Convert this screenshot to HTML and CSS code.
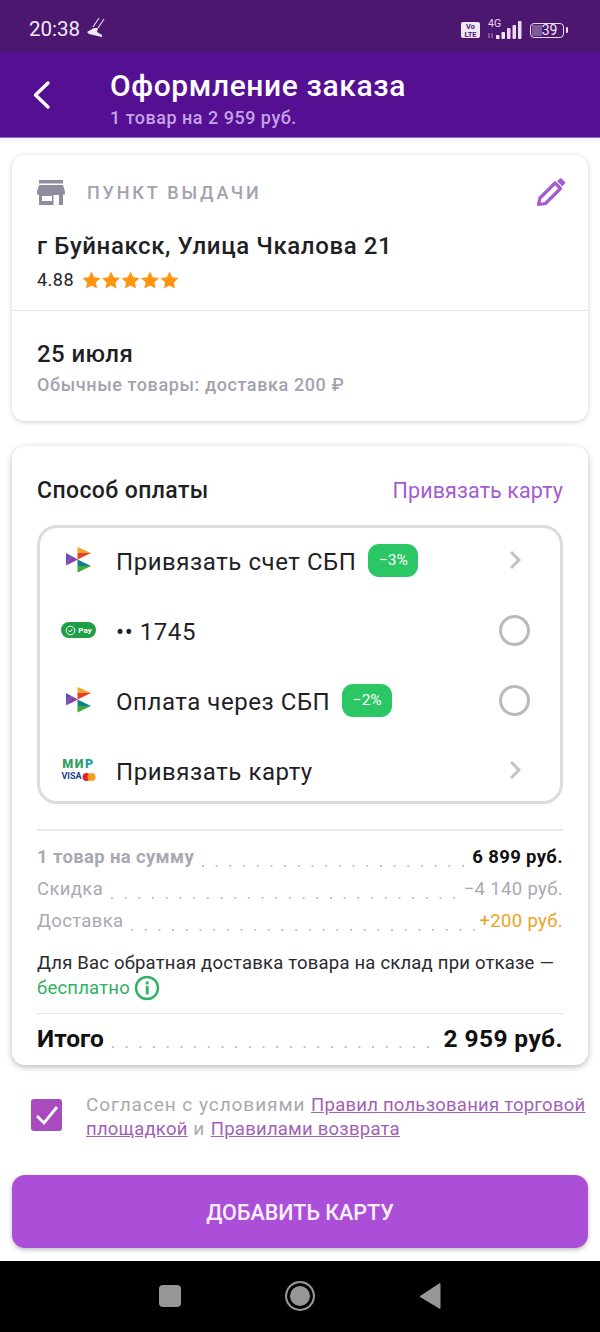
FILE: index.html
```html
<!DOCTYPE html>
<html lang="ru">
<head>
<meta charset="utf-8">
<title>Оформление заказа</title>
<link rel="stylesheet" href="styles.css">
</head>
<body>
<div class="screen">
  <header class="status">
    <div class="status-left">
      <span class="time">20:38</span>
      <svg class="shoe" width="20" height="24" viewBox="0 0 20 24"><path d="M14 1 8 10M19 2l-6 9" stroke="#d9c4e4" stroke-width="1.300" fill="none"/><path d="M2 15l7-4h4l-1 4 5 3v2L4 17Z" fill="#f3e9f6"/></svg>
    </div>
    <div class="status-right">
      <span class="volte">Vo<br>LTE</span>
      <svg width="40" height="24" viewBox="0 0 40 24"><text x="4" y="9" class="net">4G</text><path d="M5 15v5M8 20v-5" stroke="#9d7fb0" stroke-width="1.200"/><rect x="12" y="17" width="3.500" height="4" rx="1" fill="#f3e9f6"/><rect x="17.500" y="14" width="3.500" height="7" rx="1" fill="#f3e9f6"/><rect x="23" y="10" width="3.500" height="11" rx="1" fill="#e9dcef"/><rect x="28.500" y="7" width="3.500" height="14" rx="1" fill="#e9dcef"/><rect x="34" y="3" width="3.500" height="18" rx="1" fill="#e9dcef"/></svg>
      <span class="battery"><span class="battery-fill"></span><span class="battery-num">39</span></span>
      <span class="battery-tip"></span>
    </div>
  </header>
  <div class="appbar">
    <svg class="back" width="20" height="30" viewBox="0 0 20 30"><path d="M16 3 3.500 15 16 27" fill="none" stroke="#fff" stroke-width="3.400" stroke-linecap="round" stroke-linejoin="round"/></svg>
    <div class="appbar-text">
      <div class="title">Оформление заказа</div>
      <div class="subtitle">1 товар на 2 959 руб.</div>
    </div>
  </div>

  <main class="content">
    <section class="card pickup">
      <div class="pickup-top">
        <div class="pickup-head">
          <svg width="28" height="26" viewBox="0 0 28 26"><path d="M2 1h24v3.500H2zM2 6h24l2 6.500v3h-2V26h-4v-10h-5.500v10H2V15.500H0v-3Z" fill="#8f8c9f"/><rect x="5" y="17" width="10" height="5" fill="#fff"/></svg>
          <span class="pickup-label">ПУНКТ ВЫДАЧИ</span>
          <svg class="edit" width="30" height="30" viewBox="0 0 30 30"><path d="M2.500 27.500 4 21 19 6l5.500 5.500-15 15Z" fill="none" stroke="#a65bd1" stroke-width="3.200" stroke-linejoin="round"/><path d="M21 4l4-3 4.500 4.500-3 4Z" fill="#a65bd1"/></svg>
        </div>
        <div class="address">г Буйнакск, Улица Чкалова 21</div>
        <div class="rating">
          <span>4.88</span>
          <span class="stars">
            <svg width="97" height="18" viewBox="0 0 97 18"><use href="#star"/><use href="#star" x="19.500"/><use href="#star" x="39"/><use href="#star" x="58.500"/><use href="#star" x="78"/></svg>
          </span>
        </div>
      </div>
      <div class="pickup-bottom">
        <div class="date">25 июля</div>
        <div class="delivery-note">Обычные товары: доставка 200 ₽</div>
      </div>
    </section>

    <section class="card pay">
      <div class="pay-head">
        <span class="pay-title">Способ оплаты</span>
        <span class="pay-link">Привязать карту</span>
      </div>
      <div class="methods">
        <div class="method">
          <span class="method-icon"><svg width="26" height="26" viewBox="0 0 26 26"><use href="#sbp"/></svg></span>
          <span class="method-name">Привязать счет СБП</span>
          <span class="tag">−3%</span>
          <svg class="chev" width="14" height="20" viewBox="0 0 14 20"><path d="M3 2l8 8-8 8" fill="none" stroke="#c2c2ca" stroke-width="3"/></svg>
        </div>
        <div class="method">
          <span class="method-icon"><span class="gpay"><svg width="11" height="11" viewBox="0 0 11 11"><circle cx="5.500" cy="5.500" r="4.300" fill="none" stroke="#fff" stroke-width="1"/><path d="M3.500 5.500l1.500 1.500 2.500-3" fill="none" stroke="#fff"/></svg><span>Pay</span></span></span>
          <span class="method-name">•• 1745</span>
          <span class="radio"></span>
        </div>
        <div class="method">
          <span class="method-icon"><svg width="26" height="26" viewBox="0 0 26 26"><use href="#sbp"/></svg></span>
          <span class="method-name">Оплата через СБП</span>
          <span class="tag">−2%</span>
          <span class="radio"></span>
        </div>
        <div class="method">
          <span class="method-icon"><span class="cards"><span class="mir">МИ<span class="mir-p">Р</span></span><span class="visa">VISA<svg width="14" height="8" viewBox="0 0 14 8"><circle cx="4.500" cy="4" r="4" fill="#e8202a"/><circle cx="9.500" cy="4" r="4" fill="#f79e1b"/></svg></span></span></span>
          <span class="method-name">Привязать карту</span>
          <svg class="chev" width="14" height="20" viewBox="0 0 14 20"><path d="M3 2l8 8-8 8" fill="none" stroke="#c2c2ca" stroke-width="3"/></svg>
        </div>
      </div>

      <div class="summary">
        <div class="line bold"><span class="line-name">1 товар на сумму</span><span class="dots"></span><span class="line-val black">6 899 руб.</span></div>
        <div class="line"><span class="line-name">Скидка</span><span class="dots"></span><span class="line-val">−4 140 руб.</span></div>
        <div class="line"><span class="line-name">Доставка</span><span class="dots"></span><span class="line-val orange">+200 руб.</span></div>
      </div>
      <div class="return-note">
        Для Вас обратная доставка товара на склад при отказе —<br>
        <span class="free">бесплатно</span><svg class="info" width="26" height="26" viewBox="0 0 26 26"><circle cx="13" cy="13" r="11" fill="none" stroke="#2fb163" stroke-width="2.400"/><rect x="11.800" y="6.500" width="2.800" height="3" fill="#2fb163"/><rect x="11.800" y="11" width="2.800" height="8.500" fill="#2fb163"/></svg>
      </div>
      <div class="total"><span class="total-name">Итого</span><span class="dots thin"></span><span class="total-val">2 959 руб.</span></div>
    </section>

    <div class="agree">
      <span class="check"><svg width="32" height="32" viewBox="0 0 32 32"><path d="M6 17l7 7L26 8" fill="none" stroke="#fff" stroke-width="2.800"/></svg></span>
      <p class="agree-text">Согласен с условиями <a class="agree-link">Правил пользования торговой</a><br><a class="agree-link">площадкой</a> и <a class="agree-link">Правилами возврата</a></p>
    </div>

    <button class="cta">ДОБАВИТЬ КАРТУ</button>
  </main>

  <footer class="navbar">
    <span class="nav-square"></span>
    <span class="nav-circle"></span>
    <svg width="22" height="26" viewBox="0 0 22 26"><path d="M21 0.500v25L1 13.500Z" fill="#969696" stroke="#969696" stroke-linejoin="round"/></svg>
  </footer>
</div>

<svg class="defs" width="0" height="0">
  <defs>
    <path id="star" d="M9.500 0.500l2.700 5.800 6.300.8-4.600 4.300 1.200 6.200-5.600-3.100-5.600 3.100 1.200-6.200L.5 7.100l6.300-.8Z" fill="#ff9510"/>
    <g id="sbp">
      <path d="M11.500 0 25 6l-13.500 0Z" fill="#f2a52b"/>
      <path d="M11.500 6H25L11.500 12.500Z" fill="#e5402c"/>
      <path d="M0 6l6 3.200L3 12.500l-3 6Z" fill="#5b55b8"/>
      <path d="M6 9.200l6 3.300-12 6 3-6Z" fill="#8e3fa6"/>
      <path d="M11.500 12.500 25 19H11.500Z" fill="#10808f"/>
      <path d="M11.500 19H25L11.500 25.500Z" fill="#3fa83f"/>
    </g>
  </defs>
</svg>
</body>
</html>
```
FILE: styles.css
```css
* { box-sizing: border-box; }
html, body { margin: 0; padding: 0; }
body {
  width: 600px;
  height: 1332px;
  overflow: hidden;
  font-family: Roboto, "Noto Sans", sans-serif;
  background: #fff;
  color: #1c1c22;
}
.screen { display: flex; flex-direction: column; height: 1332px; }
.defs { position: absolute; }

.status {
  height: 52px;
  flex: none;
  background: #4c176f;
  display: flex;
  align-items: center;
  justify-content: space-between;
  padding: 0 32px 0 29px;
  color: #f3e9f6;
}
.status-left { display: flex; align-items: center; gap: 5px; }
.time { font-size: 20.500px; font-weight: 400; padding-top: 5px; }
.shoe { margin-top: 6px; }
.status-right { display: flex; align-items: center; padding-top: 8px; }
.volte {
  width: 19px;
  height: 16px;
  background: #efe6f2;
  color: #4c176f;
  border-radius: 2px;
  font-size: 7.500px;
  font-weight: 700;
  line-height: 7.500px;
  text-align: center;
  margin-right: 4px;
  padding-top: 1px;
}
.net { font-size: 10.500px; fill: #e9dcef; font-family: Roboto, sans-serif; }
.battery {
  position: relative;
  width: 34px;
  height: 15px;
  margin-left: 6px;
  border: 1.500px solid #e9dcef;
  border-radius: 4px;
  display: flex;
  align-items: center;
  justify-content: center;
  overflow: hidden;
}
.battery-fill { position: absolute; left: 1px; top: 1px; bottom: 1px; width: 10px; background: #7f5a9a; }
.battery-num { position: relative; font-size: 14px; line-height: 13px; padding-left: 5px; }
.battery-tip { width: 2px; height: 6px; background: #e9dcef; margin-left: 2px; border-radius: 1px; }

.appbar {
  height: 86px;
  flex: none;
  background: #540f92;
  border-bottom: 1px solid #9a6cc8;
  box-shadow: 0 2px 3px rgba(0, 0, 0, .08);
  display: flex;
  align-items: center;
  padding-left: 32px;
}
.back { margin-right: 58px; flex: none; }
.appbar-text { padding-top: 7px; }
.title { font-size: 30px; line-height: 33px; font-weight: 500; color: #fff; letter-spacing: .6px; }
.subtitle { margin-top: 5px; font-size: 18px; line-height: 21px; font-weight: 500; color: #c6a3e6; letter-spacing: .5px; }

.content { flex: 1; padding: 17px 12px 0; display: flex; flex-direction: column; min-height: 0; }
.card { background: #fff; border-radius: 13px; box-shadow: 0 1px 5px rgba(0, 0, 0, .2); }

.pickup { height: 266px; margin-bottom: 25px; flex: none; }
.pickup-top { height: 156px; border-bottom: 1px solid #e3e3e6; padding: 22px 22px 0 25px; }
.pickup-head { display: flex; align-items: center; height: 30px; }
.pickup-label { margin-left: 22px; font-size: 18px; font-weight: 500; letter-spacing: 2.800px; color: #a3a2b0; }
.edit { margin-left: auto; }
.address { margin-top: 24px; font-size: 24px; line-height: 30px; font-weight: 500; letter-spacing: .6px; color: #1f1f25; }
.rating { margin-top: 7px; display: flex; align-items: center; font-size: 18px; line-height: 24px; color: #25252b; gap: 8px; letter-spacing: .5px; }
.stars { display: flex; }
.pickup-bottom { padding: 28px 25px 0; }
.date { font-size: 24px; line-height: 30px; font-weight: 500; letter-spacing: .4px; color: #1f1f25; }
.delivery-note { margin-top: 5px; font-size: 18px; line-height: 22px; font-weight: 500; color: #a3a2b0; letter-spacing: .6px; }

.pay { height: 619px; flex: none; padding: 27px 25px 0; box-shadow: 0 2px 6px rgba(0, 0, 0, .28); }
.pay-head { display: flex; align-items: center; justify-content: space-between; height: 34px; }
.pay-title { font-size: 23px; font-weight: 500; letter-spacing: .4px; color: #1f1f25; }
.pay-link { font-size: 21.500px; font-weight: 400; color: #a65bd1; letter-spacing: .1px; }
.methods {
  margin-top: 18px;
  border: 3px solid #dcdce0;
  border-radius: 20px;
  height: 279px;
  padding: 0 30px 0 21px;
  display: flex;
  flex-direction: column;
  gap: 6px;
}
.method { height: 64px; display: flex; align-items: center; flex: none; }
.method-icon { width: 55px; flex: none; display: flex; justify-content: center; padding-right: 20px; }
.method-name { font-size: 24px; letter-spacing: .55px; color: #1f1f25; padding-top: 3px; }
.tag {
  margin-left: 12px;
  width: 50px;
  height: 33px;
  border-radius: 11px;
  background: #2cc765;
  color: #fff;
  font-size: 15.500px;
  display: flex;
  align-items: center;
  justify-content: center;
}
.chev { margin-left: auto; margin-right: 8px; }
.radio { margin-left: auto; width: 31px; height: 31px; border-radius: 50%; border: 3px solid #b9b9c2; }
.gpay {
  width: 35px;
  height: 16px;
  flex: none;
  background: #1f9f45;
  border-radius: 8px;
  color: #fff;
  font-size: 8px;
  font-weight: 700;
  display: flex;
  align-items: center;
  justify-content: center;
  gap: 2px;
}
.cards { display: flex; flex-direction: column; align-items: center; line-height: 1; width: 35px; flex: none; }
.mir { font-size: 12.500px; line-height: 9px; font-weight: 900; color: #2fa05a; letter-spacing: 1.600px; }
.mir-p { color: #1f9fa8; }
.visa { margin-top: 4px; display: flex; align-items: center; gap: 0; font-size: 9px; font-weight: 700; color: #1d3f8f; }

.summary { margin-top: 25px; border-top: 2px solid #e9e9ec; padding-top: 10px; }
.line { height: 32px; display: flex; align-items: center; font-size: 18.500px; color: #a9a9b3; letter-spacing: .35px; }
.line.bold { font-weight: 700; }
.dots {
  flex: 1;
  height: 22px;
  margin: 0 2px 0 8px;
  align-self: center;
  background: radial-gradient(circle at 1px 1px, #c4c4cb 1px, transparent 1.200px) 0 100% / 13.700px 3px repeat-x;
}
.dots.thin { margin: 0 6px 0 8px; height: 20px; }
.line-val { color: #a9a9b3; }
.black { color: #111; }
.orange { color: #eba21f; }
.return-note { margin-top: 15px; font-size: 18.500px; line-height: 23px; letter-spacing: .2px; color: #2a2a30; }
.free { color: #2fb163; }
.info { vertical-align: -7px; margin-left: 4px; }
.total {
  margin-top: 12px;
  border-top: 1px solid #e5e5e8;
  height: 50px;
  display: flex;
  align-items: center;
  color: #111;
  font-size: 24.500px;
  font-weight: 700;
}
.total-val { letter-spacing: .4px; }

.agree { margin-top: 27px; display: flex; align-items: flex-start; height: 83px; flex: none; }
.check {
  width: 31px;
  height: 32px;
  margin: 7px 0 0 19px;
  background: #a94bbf;
  border-radius: 3px;
  flex: none;
}
.check svg { display: block; }
.agree-text { margin: 1px 0 0 24px; width: 505px; flex: none; font-size: 19px; line-height: 24px; letter-spacing: .95px; color: #a9a9ae; white-space: nowrap; }
.agree-link { font-size: 18.500px; letter-spacing: .23px; color: #a261b5; text-decoration: underline; }

.cta {
  height: 73px;
  flex: none;
  border: 0;
  border-radius: 13px;
  padding-top: 3px;
  background: #ab4fd9;
  color: #fbeffc;
  font-family: Roboto, sans-serif;
  font-size: 21.500px;
  font-weight: 500;
  box-shadow: 0 2px 4px rgba(0, 0, 0, .25);
}

.navbar {
  height: 71px;
  flex: none;
  background: #000;
  display: flex;
  align-items: center;
  justify-content: center;
  gap: 104px;
  padding-bottom: 1px;
}
.nav-square { width: 22px; height: 22px; background: #969696; border-radius: 4px; }
.nav-circle {
  width: 30px;
  height: 30px;
  border-radius: 50%;
  background: #969696;
  border: 2.500px solid #969696;
  box-shadow: inset 0 0 0 3px #000;
}
```
